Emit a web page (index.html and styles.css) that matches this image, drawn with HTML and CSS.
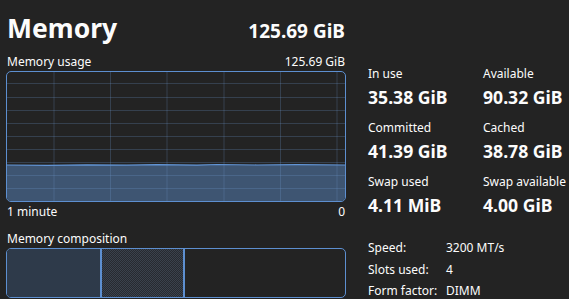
FILE: index.html
```html
<!DOCTYPE html>
<html>
<head>
<meta charset="utf-8">
<link rel="stylesheet" href="styles.css">
</head>
<body>
<div class="page">
  <div class="left">
    <div class="head">
      <div class="title">Memory</div>
      <div class="total">125.69 GiB</div>
    </div>
    <div class="sub"><span>Memory usage</span><span>125.69 GiB</span></div>
    <div class="graph">
      <svg width="338" height="129" viewBox="0 0 338 129">
        <path class="fill" d="M0 93 L40 93.3 L80 92.8 L120 93.2 L150 92.6 L190 93.1 L210 92.5 L250 93 L290 92.6 L338 93 L338 129 L0 129 Z"/>
        <g class="grid">
          <line x1="47" y1="0" x2="47" y2="129"/>
          <line x1="103.5" y1="0" x2="103.5" y2="129"/>
          <line x1="160" y1="0" x2="160" y2="129"/>
          <line x1="217" y1="0" x2="217" y2="129"/>
          <line x1="273.5" y1="0" x2="273.5" y2="129"/>
          <line x1="330" y1="0" x2="330" y2="129"/>
          <line x1="0" y1="11.5" x2="338" y2="11.5"/>
          <line x1="0" y1="25.5" x2="338" y2="25.5"/>
          <line x1="0" y1="38.5" x2="338" y2="38.5"/>
          <line x1="0" y1="51.5" x2="338" y2="51.5"/>
          <line x1="0" y1="64.5" x2="338" y2="64.5"/>
          <line x1="0" y1="77.5" x2="338" y2="77.5"/>
          <line x1="0" y1="90.5" x2="338" y2="90.5"/>
          <line x1="0" y1="103.5" x2="338" y2="103.5"/>
          <line x1="0" y1="116.5" x2="338" y2="116.5"/>
        </g>
        <path class="line" d="M0 93 L40 93.3 L80 92.8 L120 93.2 L150 92.6 L190 93.1 L210 92.5 L250 93 L290 92.6 L338 93"/>
      </svg>
    </div>
    <div class="axis"><span>1 minute</span><span>0</span></div>
    <div class="comp-label">Memory composition</div>
    <div class="comp">
      <div class="seg-used"></div>
      <div class="seg-cached"></div>
    </div>
  </div>
  <div class="right">
    <div class="stats">
      <div class="stat"><div class="label">In use</div><div class="value">35.38 GiB</div></div>
      <div class="stat"><div class="label">Available</div><div class="value">90.32 GiB</div></div>
      <div class="stat"><div class="label">Committed</div><div class="value">41.39 GiB</div></div>
      <div class="stat"><div class="label">Cached</div><div class="value">38.78 GiB</div></div>
      <div class="stat"><div class="label">Swap used</div><div class="value">4.11 MiB</div></div>
      <div class="stat"><div class="label">Swap available</div><div class="value">4.00 GiB</div></div>
    </div>
    <div class="details">
      <span>Speed:</span><span>3200 MT/s</span>
      <span>Slots used:</span><span>4</span>
      <span>Form factor:</span><span>DIMM</span>
    </div>
  </div>
</div>
</body>
</html>
```
FILE: styles.css
```css
html, body {
  margin: 0;
  padding: 0;
  background: #232323;
  color: #fcfcfc;
  font-family: "Noto Sans", "DejaVu Sans", sans-serif;
  overflow: hidden;
}
.page {
  display: flex;
  gap: 22px;
  padding-left: 6px;
  width: 569px;
  height: 299px;
  box-sizing: border-box;
}
.left {
  width: 340px;
  display: flex;
  flex-direction: column;
}
.head {
  margin-top: 12px;
  height: 32px;
  line-height: 32px;
  display: flex;
  justify-content: space-between;
  align-items: baseline;
  padding-left: 1px;
}
.title {
  font-size: 26.5px;
  font-weight: 700;
}
.total {
  font-size: 19px;
  font-weight: 700;
  padding-right: 1px;
}
.sub, .axis {
  display: flex;
  justify-content: space-between;
  font-size: 12px;
  line-height: 16px;
  padding: 0 1px;
}
.sub { margin-top: 10px; }
.graph {
  margin-top: 1px;
  height: 131px;
  border: 1px solid #5d8fd0;
  border-radius: 5px;
  box-sizing: border-box;
  overflow: hidden;
}
.graph svg { display: block; }
.fill { fill: #3e5572; }
.line { fill: none; stroke: #6295d6; stroke-width: 1.2; }
.grid line { stroke: rgba(110, 150, 205, 0.26); stroke-width: 1; }
.axis { margin-top: 2px; }
.comp-label {
  margin-top: 11px;
  font-size: 12px;
  line-height: 16px;
  padding-left: 1px;
}
.comp {
  margin-top: 1px;
  height: 50px;
  border: 1px solid #5d8fd0;
  border-radius: 5px;
  box-sizing: border-box;
  overflow: hidden;
  display: flex;
}
.seg-used {
  width: 93px;
  background: #2e3a4a;
  border-right: 2px solid #5d8fd0;
}
.seg-cached {
  width: 81px;
  background: repeating-conic-gradient(#3a424d 0 25%, #272a30 0 50%) 0 0 / 2px 2px;
  border-right: 2px solid #5d8fd0;
}
.right {
  flex: 1;
  display: flex;
  flex-direction: column;
}
.stats {
  margin-top: 66px;
  display: grid;
  grid-template-columns: 115px auto;
  row-gap: 12px;
}
.label {
  font-size: 12px;
  line-height: 16px;
}
.value {
  margin-top: 4px;
  font-size: 17.6px;
  line-height: 22px;
  font-weight: 700;
}
.details {
  margin-top: 21px;
  display: grid;
  grid-template-columns: 78px auto;
  font-size: 12px;
  line-height: 21.5px;
}
```
